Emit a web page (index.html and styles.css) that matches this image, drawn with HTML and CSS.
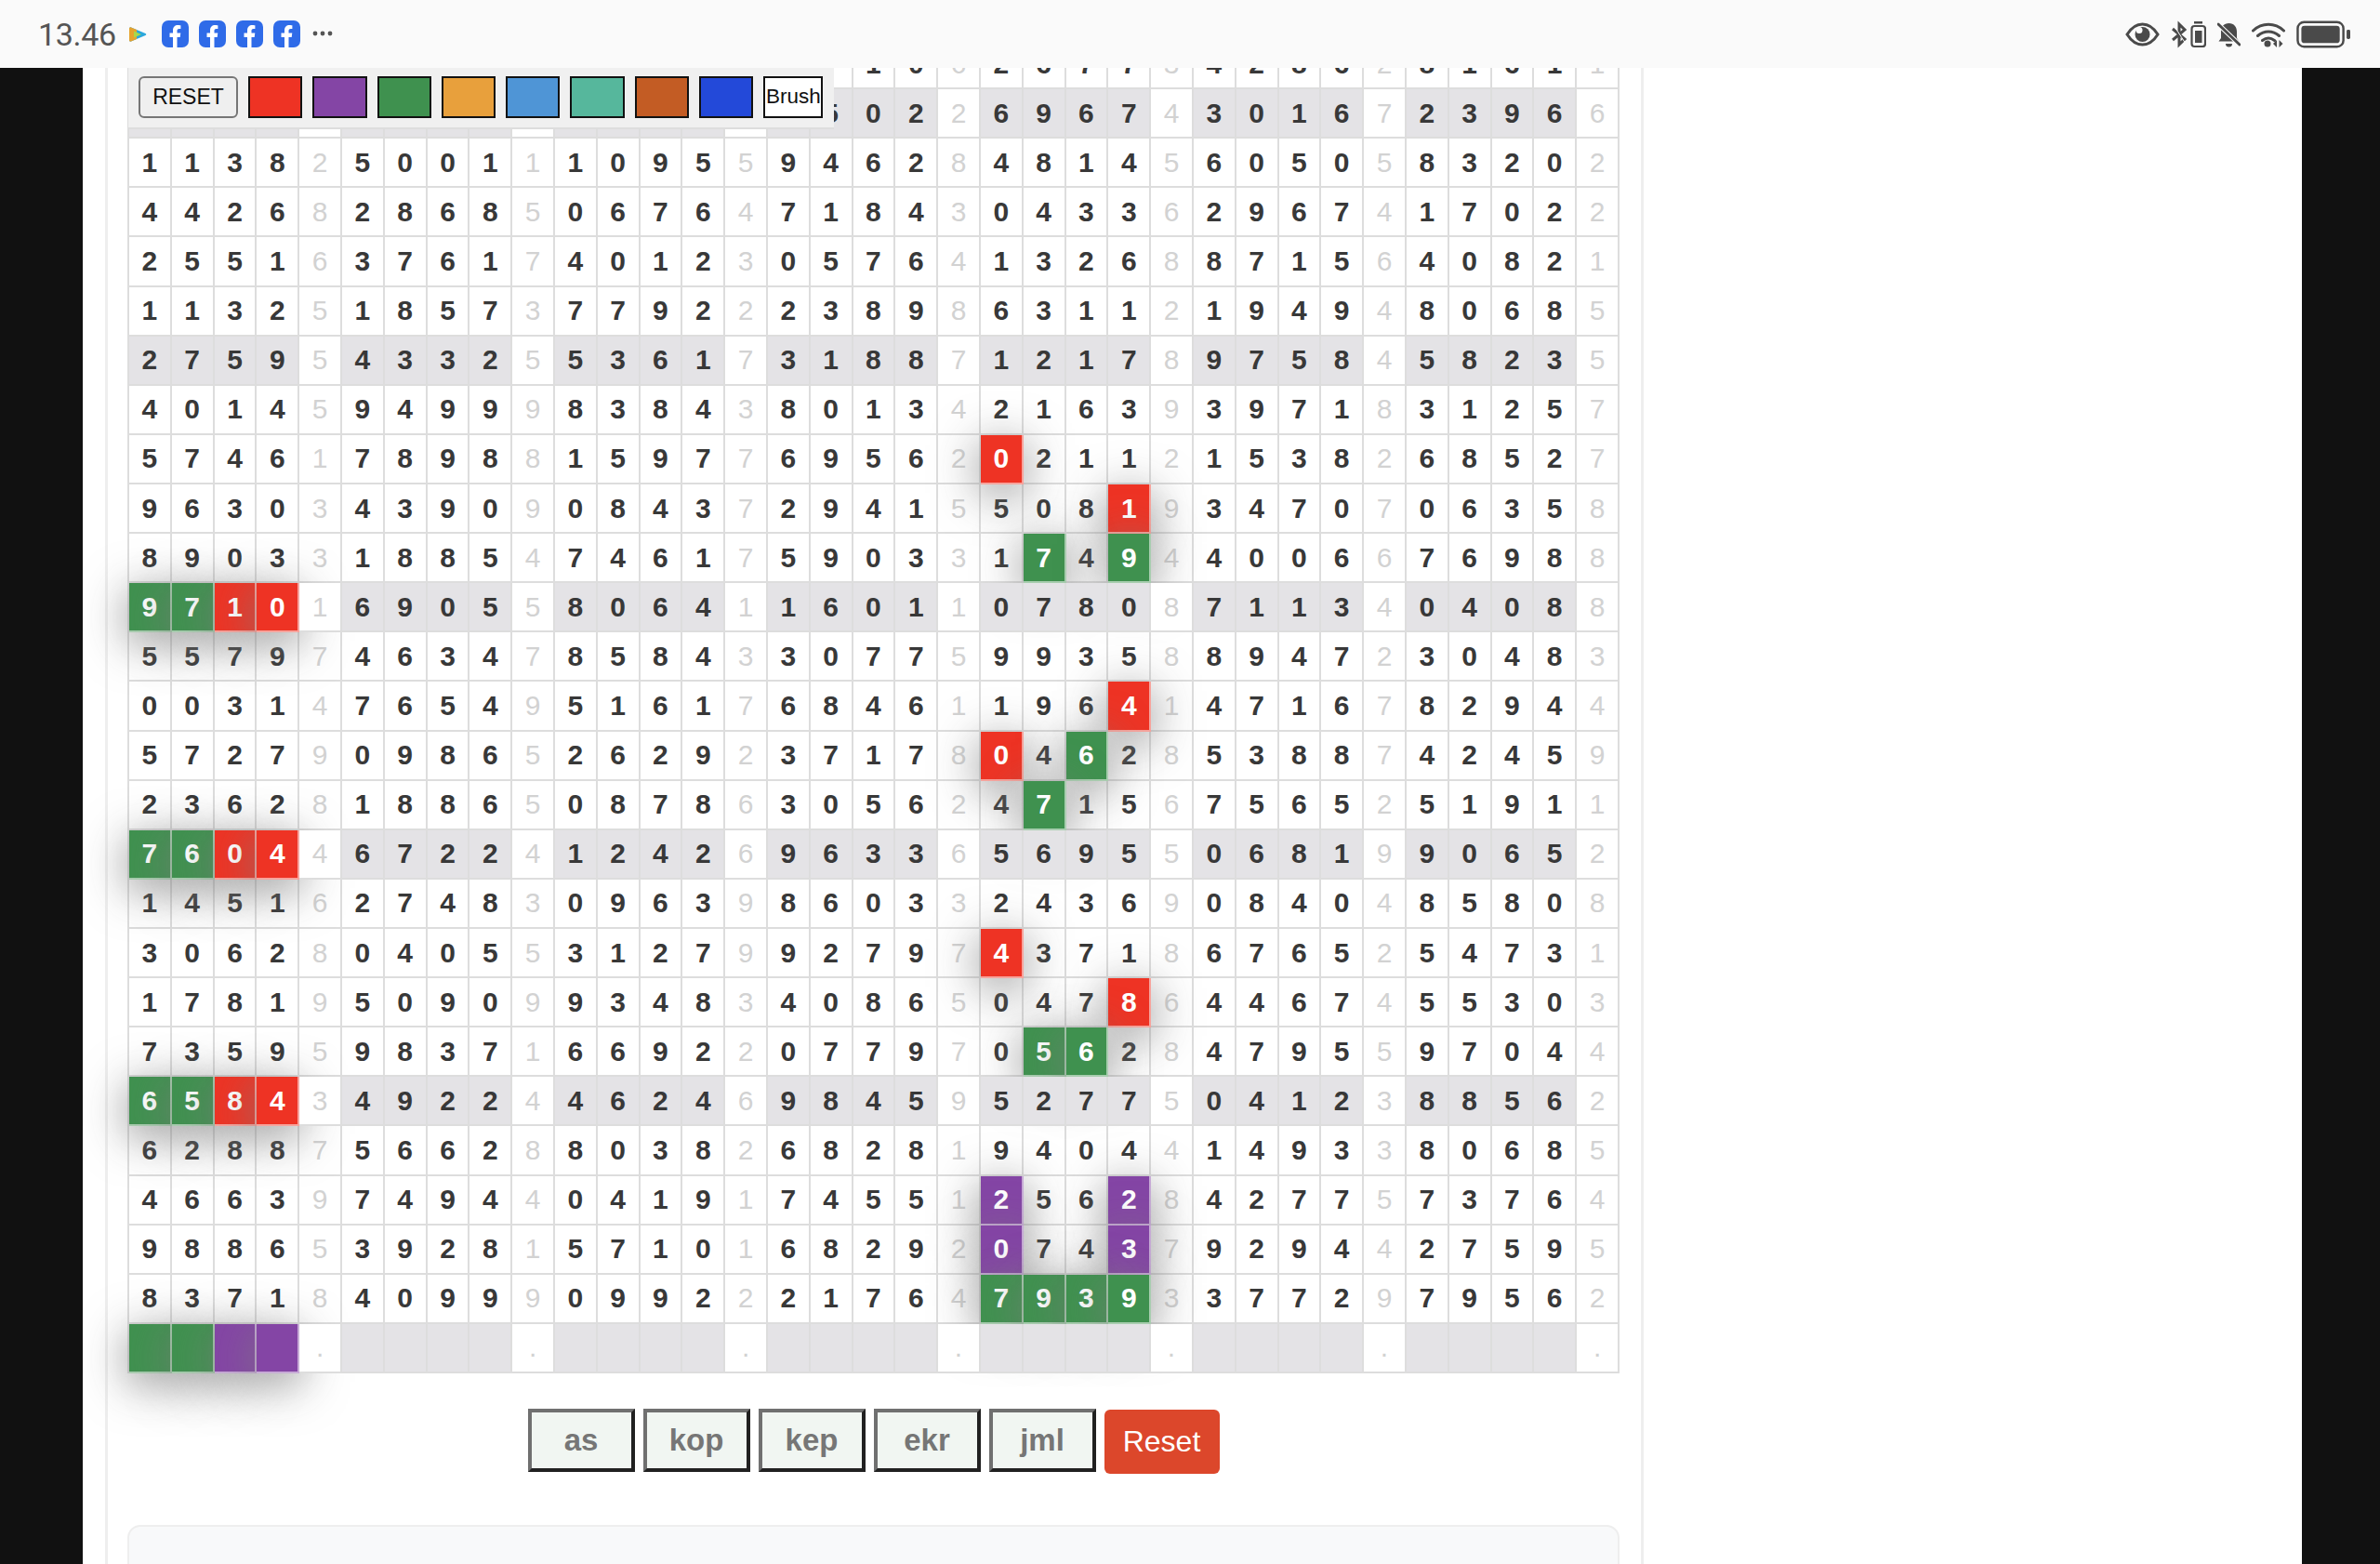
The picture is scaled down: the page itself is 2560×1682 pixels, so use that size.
FILE: index.html
```html
<!DOCTYPE html>
<html lang="id">
<head>
<meta charset="utf-8">
<title>Rumus</title>
<link rel="stylesheet" href="styles.css">
</head>
<body>
<header class="status">
  <div class="status-left">
    <span class="time">13.46</span>
    <svg class="ic-play" viewBox="0 0 20 18"><path d="M3 1.500 18.500 8a1.200 1.200 0 0 1 0 2L3 16.500C1.500 17 1 16 1 15V3c0-1 .8-2 2-1.500Z" fill="#2aa7dc"/><path d="M1 3c0-1 .8-2 2-1.500L9 4v10l-6 2.500C1.500 17 1 16 1 15Z" fill="#e6a32e"/><path d="M6 5.500 14 9l-8 3.500Z" fill="#a8d84a"/></svg>
    <div class="fb-row">
      <svg class="ic-fb" viewBox="0 0 29 29"><rect width="29" height="29" rx="7" fill="#2f6be8"/><path d="M12 29V18H8.500v-4.500H12V10.500C12 7 14.200 5 17.400 5c1.500 0 3 .3 3 .3v3.700h-1.700c-1.800 0-2.200 1-2.200 2.200v2.300h3.800l-.6 4.500h-3.200v11Z" fill="#fff"/></svg>
      <svg class="ic-fb" viewBox="0 0 29 29"><rect width="29" height="29" rx="7" fill="#2f6be8"/><path d="M12 29V18H8.500v-4.500H12V10.500C12 7 14.200 5 17.400 5c1.500 0 3 .3 3 .3v3.700h-1.700c-1.800 0-2.200 1-2.200 2.200v2.300h3.800l-.6 4.500h-3.200v11Z" fill="#fff"/></svg>
      <svg class="ic-fb" viewBox="0 0 29 29"><rect width="29" height="29" rx="7" fill="#2f6be8"/><path d="M12 29V18H8.500v-4.500H12V10.500C12 7 14.200 5 17.400 5c1.500 0 3 .3 3 .3v3.700h-1.700c-1.800 0-2.200 1-2.200 2.200v2.300h3.800l-.6 4.500h-3.200v11Z" fill="#fff"/></svg>
      <svg class="ic-fb" viewBox="0 0 29 29"><rect width="29" height="29" rx="7" fill="#2f6be8"/><path d="M12 29V18H8.500v-4.500H12V10.500C12 7 14.200 5 17.400 5c1.500 0 3 .3 3 .3v3.700h-1.700c-1.800 0-2.200 1-2.200 2.200v2.300h3.800l-.6 4.500h-3.200v11Z" fill="#fff"/></svg>
    </div>
    <svg class="ic-dots" viewBox="0 0 22 6"><circle cx="3" cy="3" r="2.400" fill="#555"/><circle cx="11" cy="3" r="2.400" fill="#555"/><circle cx="19" cy="3" r="2.400" fill="#555"/></svg>
  </div>
  <div class="status-right">
    <svg class="ic-eye" viewBox="0 0 37 26"><path d="M2 13C7 5 12.500 2 18.500 2S30 5 35 13c-5 8-10.500 11-16.500 11S7 21 2 13Z" fill="none" stroke="#4a4a4a" stroke-width="3"/><circle cx="18.500" cy="13" r="8" fill="#4a4a4a"/><circle cx="15" cy="8.500" r="3.500" fill="#fafafa"/></svg>
    <svg class="ic-bt" viewBox="0 0 38 30"><path d="M2 9 15 20l-6 6V4l6 6L2 21" fill="none" stroke="#4a4a4a" stroke-width="3"/><path d="m3 5 13 20" stroke="#fafafa" stroke-width="1"/><rect x="25" y="1" width="9" height="2.500" fill="#4a4a4a"/><rect x="22.500" y="6" width="14.500" height="22" rx="3" fill="none" stroke="#4a4a4a" stroke-width="2.200"/><rect x="26" y="11" width="7.500" height="13" fill="#4a4a4a"/></svg>
    <svg class="ic-bell" viewBox="0 0 25 28"><path d="M12.500 2C18 2 21 6 21 11v7l2.500 3.500H1.500L4 18v-8C4 6 7 2 12.500 2Z" fill="#4a4a4a"/><path d="M9 24h7a3.500 3.500 0 0 1-7 0Z" fill="#4a4a4a"/><path d="M1 3l23 22" stroke="#fafafa" stroke-width="5"/><path d="M1 3l23 22" stroke="#4a4a4a" stroke-width="3" stroke-linecap="round"/></svg>
    <svg class="ic-wifi" viewBox="0 0 36 28"><path d="M1.500 10C11 1 25 1 34.500 10M6.500 15.500c7-6 16-6 23 0M11.500 20.500c4-3 9-3 13 0" fill="none" stroke="#4a4a4a" stroke-width="3" stroke-linecap="round"/><circle cx="17" cy="24" r="3.500" fill="#4a4a4a"/><path d="M27 20v8l-4-4ZM29.500 20v8l4-4Z" fill="#4a4a4a"/></svg>
    <svg class="ic-batt" viewBox="0 0 59 30"><rect x="1.500" y="1.500" width="50" height="27" rx="7" fill="none" stroke="#4a4a4a" stroke-width="2.500"/><rect x="5.500" y="5.500" width="42" height="19" rx="3.500" fill="#4a4a4a"/><rect x="55" y="10" width="4" height="10" rx="1.500" fill="#4a4a4a"/></svg>
  </div>
</header>

<main class="page">
  <section class="card">
    <div class="toolbar">
      <button class="reset-small">RESET</button>
      <button class="swatch red"></button>
      <button class="swatch purple"></button>
      <button class="swatch green"></button>
      <button class="swatch orange"></button>
      <button class="swatch blue"></button>
      <button class="swatch teal"></button>
      <button class="swatch brown"></button>
      <button class="swatch royal"></button>
      <button class="brush">Brush</button>
    </div>
    <table class="grid">
<tr><td><td><td><td><td><td><td><td><td><td><td><td><td><td><td><td><td>7<td>1<td>0<td>6<td>2<td>6<td>7<td>7<td>3<td>4<td>2<td>8<td>6<td>2<td>8<td>1<td>6<td>1<td>1
<tr class="alt"><td><td><td><td><td><td><td><td><td><td><td><td><td><td><td><td><td>5<td>0<td>2<td>2<td>6<td>9<td>6<td>7<td>4<td>3<td>0<td>1<td>6<td>7<td>2<td>3<td>9<td>6<td>6
<tr><td>1<td>1<td>3<td>8<td>2<td>5<td>0<td>0<td>1<td>1<td>1<td>0<td>9<td>5<td>5<td>9<td>4<td>6<td>2<td>8<td>4<td>8<td>1<td>4<td>5<td>6<td>0<td>5<td>0<td>5<td>8<td>3<td>2<td>0<td>2
<tr><td>4<td>4<td>2<td>6<td>8<td>2<td>8<td>6<td>8<td>5<td>0<td>6<td>7<td>6<td>4<td>7<td>1<td>8<td>4<td>3<td>0<td>4<td>3<td>3<td>6<td>2<td>9<td>6<td>7<td>4<td>1<td>7<td>0<td>2<td>2
<tr><td>2<td>5<td>5<td>1<td>6<td>3<td>7<td>6<td>1<td>7<td>4<td>0<td>1<td>2<td>3<td>0<td>5<td>7<td>6<td>4<td>1<td>3<td>2<td>6<td>8<td>8<td>7<td>1<td>5<td>6<td>4<td>0<td>8<td>2<td>1
<tr><td>1<td>1<td>3<td>2<td>5<td>1<td>8<td>5<td>7<td>3<td>7<td>7<td>9<td>2<td>2<td>2<td>3<td>8<td>9<td>8<td>6<td>3<td>1<td>1<td>2<td>1<td>9<td>4<td>9<td>4<td>8<td>0<td>6<td>8<td>5
<tr class="alt"><td>2<td>7<td>5<td>9<td>5<td>4<td>3<td>3<td>2<td>5<td>5<td>3<td>6<td>1<td>7<td>3<td>1<td>8<td>8<td>7<td>1<td>2<td>1<td>7<td>8<td>9<td>7<td>5<td>8<td>4<td>5<td>8<td>2<td>3<td>5
<tr><td>4<td>0<td>1<td>4<td>5<td>9<td>4<td>9<td>9<td>9<td>8<td>3<td>8<td>4<td>3<td>8<td>0<td>1<td>3<td>4<td>2<td>1<td>6<td>3<td>9<td>3<td>9<td>7<td>1<td>8<td>3<td>1<td>2<td>5<td>7
<tr><td>5<td>7<td>4<td>6<td>1<td>7<td>8<td>9<td>8<td>8<td>1<td>5<td>9<td>7<td>7<td>6<td>9<td>5<td>6<td>2<td class="r">0<td>2<td>1<td>1<td>2<td>1<td>5<td>3<td>8<td>2<td>6<td>8<td>5<td>2<td>7
<tr><td>9<td>6<td>3<td>0<td>3<td>4<td>3<td>9<td>0<td>9<td>0<td>8<td>4<td>3<td>7<td>2<td>9<td>4<td>1<td>5<td>5<td>0<td>8<td class="r">1<td>9<td>3<td>4<td>7<td>0<td>7<td>0<td>6<td>3<td>5<td>8
<tr><td>8<td>9<td>0<td>3<td>3<td>1<td>8<td>8<td>5<td>4<td>7<td>4<td>6<td>1<td>7<td>5<td>9<td>0<td>3<td>3<td>1<td class="g">7<td>4<td class="g">9<td>4<td>4<td>0<td>0<td>6<td>6<td>7<td>6<td>9<td>8<td>8
<tr class="alt"><td class="g">9<td class="g">7<td class="r">1<td class="r">0<td>1<td>6<td>9<td>0<td>5<td>5<td>8<td>0<td>6<td>4<td>1<td>1<td>6<td>0<td>1<td>1<td>0<td>7<td>8<td>0<td>8<td>7<td>1<td>1<td>3<td>4<td>0<td>4<td>0<td>8<td>8
<tr><td>5<td>5<td>7<td>9<td>7<td>4<td>6<td>3<td>4<td>7<td>8<td>5<td>8<td>4<td>3<td>3<td>0<td>7<td>7<td>5<td>9<td>9<td>3<td>5<td>8<td>8<td>9<td>4<td>7<td>2<td>3<td>0<td>4<td>8<td>3
<tr><td>0<td>0<td>3<td>1<td>4<td>7<td>6<td>5<td>4<td>9<td>5<td>1<td>6<td>1<td>7<td>6<td>8<td>4<td>6<td>1<td>1<td>9<td>6<td class="r">4<td>1<td>4<td>7<td>1<td>6<td>7<td>8<td>2<td>9<td>4<td>4
<tr><td>5<td>7<td>2<td>7<td>9<td>0<td>9<td>8<td>6<td>5<td>2<td>6<td>2<td>9<td>2<td>3<td>7<td>1<td>7<td>8<td class="r">0<td>4<td class="g">6<td>2<td>8<td>5<td>3<td>8<td>8<td>7<td>4<td>2<td>4<td>5<td>9
<tr><td>2<td>3<td>6<td>2<td>8<td>1<td>8<td>8<td>6<td>5<td>0<td>8<td>7<td>8<td>6<td>3<td>0<td>5<td>6<td>2<td>4<td class="g">7<td>1<td>5<td>6<td>7<td>5<td>6<td>5<td>2<td>5<td>1<td>9<td>1<td>1
<tr class="alt"><td class="g">7<td class="g">6<td class="r">0<td class="r">4<td>4<td>6<td>7<td>2<td>2<td>4<td>1<td>2<td>4<td>2<td>6<td>9<td>6<td>3<td>3<td>6<td>5<td>6<td>9<td>5<td>5<td>0<td>6<td>8<td>1<td>9<td>9<td>0<td>6<td>5<td>2
<tr><td>1<td>4<td>5<td>1<td>6<td>2<td>7<td>4<td>8<td>3<td>0<td>9<td>6<td>3<td>9<td>8<td>6<td>0<td>3<td>3<td>2<td>4<td>3<td>6<td>9<td>0<td>8<td>4<td>0<td>4<td>8<td>5<td>8<td>0<td>8
<tr><td>3<td>0<td>6<td>2<td>8<td>0<td>4<td>0<td>5<td>5<td>3<td>1<td>2<td>7<td>9<td>9<td>2<td>7<td>9<td>7<td class="r">4<td>3<td>7<td>1<td>8<td>6<td>7<td>6<td>5<td>2<td>5<td>4<td>7<td>3<td>1
<tr><td>1<td>7<td>8<td>1<td>9<td>5<td>0<td>9<td>0<td>9<td>9<td>3<td>4<td>8<td>3<td>4<td>0<td>8<td>6<td>5<td>0<td>4<td>7<td class="r">8<td>6<td>4<td>4<td>6<td>7<td>4<td>5<td>5<td>3<td>0<td>3
<tr><td>7<td>3<td>5<td>9<td>5<td>9<td>8<td>3<td>7<td>1<td>6<td>6<td>9<td>2<td>2<td>0<td>7<td>7<td>9<td>7<td>0<td class="g">5<td class="g">6<td>2<td>8<td>4<td>7<td>9<td>5<td>5<td>9<td>7<td>0<td>4<td>4
<tr class="alt"><td class="g">6<td class="g">5<td class="r">8<td class="r">4<td>3<td>4<td>9<td>2<td>2<td>4<td>4<td>6<td>2<td>4<td>6<td>9<td>8<td>4<td>5<td>9<td>5<td>2<td>7<td>7<td>5<td>0<td>4<td>1<td>2<td>3<td>8<td>8<td>5<td>6<td>2
<tr><td>6<td>2<td>8<td>8<td>7<td>5<td>6<td>6<td>2<td>8<td>8<td>0<td>3<td>8<td>2<td>6<td>8<td>2<td>8<td>1<td>9<td>4<td>0<td>4<td>4<td>1<td>4<td>9<td>3<td>3<td>8<td>0<td>6<td>8<td>5
<tr><td>4<td>6<td>6<td>3<td>9<td>7<td>4<td>9<td>4<td>4<td>0<td>4<td>1<td>9<td>1<td>7<td>4<td>5<td>5<td>1<td class="p">2<td>5<td>6<td class="p">2<td>8<td>4<td>2<td>7<td>7<td>5<td>7<td>3<td>7<td>6<td>4
<tr><td>9<td>8<td>8<td>6<td>5<td>3<td>9<td>2<td>8<td>1<td>5<td>7<td>1<td>0<td>1<td>6<td>8<td>2<td>9<td>2<td class="p">0<td>7<td>4<td class="p">3<td>7<td>9<td>2<td>9<td>4<td>4<td>2<td>7<td>5<td>9<td>5
<tr><td>8<td>3<td>7<td>1<td>8<td>4<td>0<td>9<td>9<td>9<td>0<td>9<td>9<td>2<td>2<td>2<td>1<td>7<td>6<td>4<td class="g">7<td class="g">9<td class="g">3<td class="g">9<td>3<td>3<td>7<td>7<td>2<td>9<td>7<td>9<td>5<td>6<td>2
<tr class="alt"><td class="g"><td class="g"><td class="p"><td class="p"><td>.<td><td><td><td><td>.<td><td><td><td><td>.<td><td><td><td><td>.<td><td><td><td><td>.<td><td><td><td><td>.<td><td><td><td><td>.
    </table>
    <div class="actions">
      <button class="op">as</button>
      <button class="op">kop</button>
      <button class="op">kep</button>
      <button class="op">ekr</button>
      <button class="op">jml</button>
      <button class="reset-big">Reset</button>
    </div>
    <div class="panel"></div>
  </section>
</main>
</body>
</html>
```

FILE: styles.css
```css
* { box-sizing: border-box; }
html, body { margin: 0; height: 1682px; overflow: hidden; }
body { background: #111; font-family: "Liberation Sans", Arial, sans-serif; }

.status {
  position: absolute; top: 0; left: 0; right: 0; z-index: 5;
  height: 73px; background: #fafafa;
  display: flex; justify-content: space-between; align-items: center;
  padding: 0 32px 0 41px;
}
.status-left { display: flex; align-items: center; }
.time { font-family: Roboto, sans-serif; font-size: 34px; color: #555; letter-spacing: -.3px; width: 97px; }
.ic-play { width: 20px; height: 18px; margin-right: 16px; }
.fb-row { display: flex; gap: 11px; margin-right: 13px; }
.ic-fb { width: 29px; height: 29px; display: block; }
.ic-dots { width: 22px; height: 6px; margin-top: -2px; }
.status-right { display: flex; align-items: center; gap: 12px; }
.ic-eye { width: 37px; height: 26px; }
.ic-bt { width: 38px; height: 30px; }
.ic-bell { width: 25px; height: 28px; }
.ic-wifi { width: 36px; height: 28px; }
.ic-batt { width: 58px; height: 30px; }

.page {
  margin: 0 84px 0 89px; height: 1682px; background: #fff;
  padding-left: 24px; overflow: hidden;
}
.card {
  position: relative;
  width: 1655px; height: 1682px;
  border: solid #eee; border-width: 0 3px;
  padding: 41px 23px 0 21px;
}

.toolbar {
  position: absolute; top: 73px; left: 22px; z-index: 4;
  width: 759px; height: 66px;
  background: #f0f0f0; border-bottom: 2px solid #ddd;
  display: flex; align-items: center; gap: 11px;
  padding: 0 0 2px 11px;
}
.toolbar button { flex: none; padding: 0; height: 45px; font-family: "Liberation Sans", sans-serif; color: #111; }
.reset-small { width: 107px; font-size: 23px; background: #efefef; border: 2px solid #767676; border-radius: 6px; }
.swatch { width: 58.300px; border: 2px solid #111; border-radius: 0; }
.red { background: #ee3324; }
.purple { background: #8445a5; }
.green { background: #3f914f; }
.orange { background: #e8a03c; }
.blue { background: #4f95d6; }
.teal { background: #56b79c; }
.brown { background: #c35c24; }
.royal { background: #2349d9; }
.brush { width: 64px; font-size: 22.500px; background: #fff; border: 2px solid #111; border-radius: 0; white-space: nowrap; overflow: visible; }

.grid {
  width: 1605px; height: 1436px; table-layout: fixed;
  border-collapse: separate; border-spacing: 0;
  border: solid #ddd; border-width: 2px 0 0 2px;
  font-size: 30px; font-weight: 700; color: #383838;
}
.grid td {
  padding: 0; height: 53.100px; text-align: center; vertical-align: middle; line-height: 1;
  border: solid #ddd; border-width: 0 2px 2px 0; background: #fff;
}
.grid td:nth-child(5n) { color: #d2d2d2; font-weight: 400; }
.alt td { position: relative; background: #e4e3e6; }
.grid .alt td:nth-child(5n) { background: #fff; }
.grid td.r, .grid td.g, .grid td.p {
  position: relative; color: #fff; font-weight: 700;
  border-color: rgba(255, 255, 255, .55);
  box-shadow: 0 10px 50px rgba(125, 125, 125, .9);
}
.grid td.r { background: #ee3324; }
.grid td.g { background: #3f914f; }
.grid td.p { background: #8445a5; }

.actions { display: flex; justify-content: center; align-items: center; gap: 9px; margin-top: 36px; }
.op {
  width: 115px; height: 68px; padding: 0;
  background: #f1f6f2; color: #767676;
  font-family: "Liberation Sans", sans-serif; font-size: 33px; font-weight: 700;
  border: 4px outset #767676; border-color: #1c1c1c #767676 #767676 #1c1c1c;
}
.reset-big {
  width: 124px; height: 69px; margin-top: 3px; padding: 0;
  background: #dc472b; color: #fff; border: 0; border-radius: 6px;
  font-family: "Liberation Sans", sans-serif; font-size: 32px;
}
.panel {
  margin-top: 55px; height: 200px;
  background: #f8f9fa; border: 2px solid #eee; border-radius: 14px;
}
```
